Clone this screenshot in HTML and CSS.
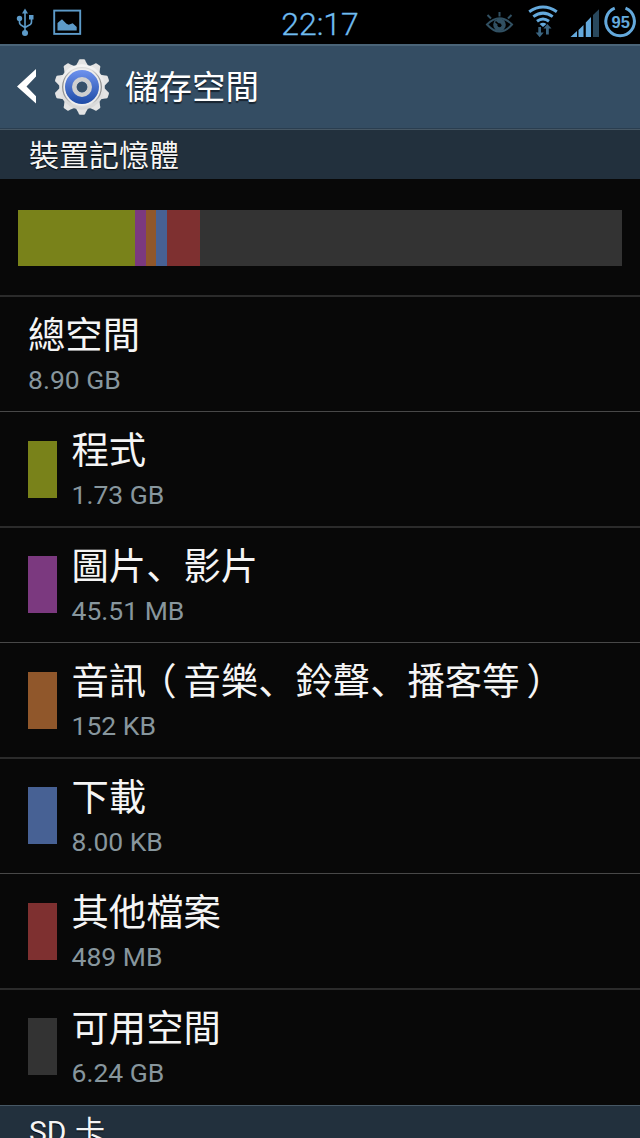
FILE: index.html
```html
<!DOCTYPE html>
<html lang="zh-Hans">
<head>
<meta charset="utf-8">
<title>儲存空間</title>
<link rel="stylesheet" href="styles.css">
</head>
<body>
<header class="status">
  <svg class="status-left" width="90" height="44" viewBox="0 0 90 44">
    <g fill="#5d9bc9" stroke="none">
      <path d="M25 8.500l3 5h-6z"/><circle cx="19.500" cy="18.500" r="2.700"/><rect x="29" y="15" width="4.500" height="4.500"/><circle cx="25" cy="33" r="3"/>
      <path d="M57.500 30.500v-7.500l4.500-3.800 4.500 4.500 2.200 1 4-1.500 4 3.800v3.500z"/>
    </g>
    <g fill="none" stroke="#5d9bc9" stroke-width="1.600">
      <path d="M25 12v20M19.500 19v3.500q0 2 3 3.500l2.500 1.500 3.500-2q3-1 3-3.500v-4"/>
      <rect x="54.200" y="10.600" width="26" height="23.300" stroke-width="1.900"/>
    </g>
  </svg>
  <time class="clock">22:17</time>
  <svg class="status-right" width="160" height="44" viewBox="480 0 160 44">
    <g fill="none" stroke="#315062" stroke-width="2">
      <path d="M487 24.500q12.500-12.500 25 0q-12.500 14-25 0z"/>
      <path d="M499.500 12v4.500M487.500 15l3.500 3.500M511.500 15l-3.500 3.500"/>
    </g>
    <circle cx="499.500" cy="24.800" r="6.300" fill="#315062"/>
    <path d="M499.500 25.200l-4-3.500" stroke="#000" stroke-width="1.600"/>
    <circle cx="499.500" cy="25.200" r="2" fill="#000"/>
    <g fill="none" stroke="#64a9dc" stroke-width="3">
      <path d="M529.200 11.800q13.800-9.500 27.600 0"/><path d="M533.300 16.600q9.700-7 19.400 0"/><path d="M537 21.200q6-4.500 12 0"/>
    </g>
    <path d="M539.500 24q3.500-2.500 7 0l-3.500 3z" fill="#64a9dc"/>
    <path d="M538.300 27h2.700v5.500h2.700l-4 4.800-4-4.800h2.600zM546 34.500h2.800v-6h2.700l-4.100-4.500-4 4.500h2.600z" fill="#3b6581"/>
    <path d="M570.500 37l6.500-6v6zM578.500 30l5-5v12h-5zM585.800 22.500l5.200-5.500v20h-5.200z" fill="#64a9dc"/>
    <path d="M593 15l6-5.800V37h-6z" fill="#29485d"/>
    <path d="M625.500 8.200a14.300 14.300 0 1 1-10.800 0" fill="none" stroke="#64a9dc" stroke-width="3"/>
    <text x="620.700" y="27.500" text-anchor="middle" class="battery">95</text>
  </svg>
</header>
<div class="actionbar">
  <svg class="back" width="20" height="36" viewBox="0 0 20 36"><path d="M19 0v7.500l-9.500 10 9.500 9.700v7.300L0 17.500z" fill="#fff"/></svg>
  <svg class="gear" width="58" height="58" viewBox="-29 -29 58 58">
    <defs>
      <linearGradient id="metal" x1="0" y1="0" x2="0" y2="1"><stop offset="0" stop-color="#f5f5f5"/><stop offset="1" stop-color="#d6d6d6"/></linearGradient>
      <linearGradient id="blue" x1="0" y1="0" x2="0" y2="1"><stop offset="0" stop-color="#6e92ee"/><stop offset="1" stop-color="#1e4ba6"/></linearGradient>
      <linearGradient id="rim" x1="0" y1="0" x2="1" y2="0"><stop offset="0" stop-color="#888"/><stop offset=".25" stop-color="#ddd"/><stop offset=".75" stop-color="#ddd"/><stop offset="1" stop-color="#888"/></linearGradient>
      <path id="tooth" d="M-6-21.500L-3.700-25.500Q-3.200-27.700-2-27.700H2Q3.200-27.700 3.700-25.500L6-21.500z"/>
    </defs>
    <g fill="#e4e4e4">
      <use href="#tooth"/><use href="#tooth" transform="rotate(36)"/><use href="#tooth" transform="rotate(72)"/><use href="#tooth" transform="rotate(108)"/><use href="#tooth" transform="rotate(144)"/><use href="#tooth" transform="rotate(180)"/><use href="#tooth" transform="rotate(216)"/><use href="#tooth" transform="rotate(252)"/><use href="#tooth" transform="rotate(288)"/><use href="#tooth" transform="rotate(324)"/>
    </g>
    <circle r="22.800" fill="url(#metal)"/>
    <circle r="19.300" fill="#eee" stroke="url(#rim)" stroke-width="1.200"/>
    <circle r="17" fill="url(#blue)"/>
    <circle r="7.700" fill="#426b9e" stroke="#cfcfcf" stroke-width="4.600"/>
    <circle r="5.200" fill="#36506a"/>
  </svg>
  <h1 class="title">儲存空間</h1>
</div>
<h2 class="section">裝置記憶體</h2>
<div class="meter">
  <div class="bar"><i class="seg apps"></i><i class="seg pics"></i><i class="seg audio"></i><i class="seg downloads"></i><i class="seg misc"></i><i class="seg free"></i></div>
</div>
<main class="list">
  <div class="row"><div class="info"><div class="name">總空間</div><div class="size">8.90 GB</div></div></div>
  <div class="row"><i class="swatch apps"></i><div class="info"><div class="name">程式</div><div class="size">1.73 GB</div></div></div>
  <div class="row"><i class="swatch pics"></i><div class="info"><div class="name">圖片、影片</div><div class="size">45.51 MB</div></div></div>
  <div class="row"><i class="swatch audio"></i><div class="info"><div class="name">音訊<span class="open">（</span>音樂、鈴聲、播客等<span class="close">）</span></div><div class="size">152 KB</div></div></div>
  <div class="row"><i class="swatch downloads"></i><div class="info"><div class="name">下載</div><div class="size">8.00 KB</div></div></div>
  <div class="row"><i class="swatch misc"></i><div class="info"><div class="name">其他檔案</div><div class="size">489 MB</div></div></div>
  <div class="row"><i class="swatch free"></i><div class="info"><div class="name">可用空間</div><div class="size">6.24 GB</div></div></div>
</main>
<h2 class="section last">SD 卡</h2>
</body>
</html>
```
FILE: styles.css
```css
* { box-sizing: border-box; }
html, body { height: 1138px; overflow: hidden; }
body {
  margin: 0;
  background: #080808;
  color: #f5f5f5;
  font-family: Roboto, "Noto Sans CJK SC", sans-serif;
  display: flex;
  flex-direction: column;
}
body > * { flex-shrink: 0; }
svg { display: block; }
.status {
  height: 44px;
  background: #000;
  display: grid;
  grid-template-columns: 160px 320px 160px;
}
.clock {
  color: #6fbcf0;
  font-size: 32px;
  font-weight: 300;
  -webkit-text-stroke: 0.3px #6fbcf0;
  line-height: 48px;
  text-align: center;
}
.battery { font: bold 16.500px "Liberation Sans", sans-serif; fill: #64a9dc; }
.actionbar {
  height: 85px;
  background: #344d63;
  border-top: 2px solid #4a6478;
  border-bottom: 1px solid #2a3e50;
  display: flex;
  align-items: center;
  padding-left: 17px;
}
.gear { margin-left: 16px; }
.title {
  margin: 2px 0 0 14px;
  font-size: 33.500px;
  line-height: 48px;
  font-weight: 400;
  color: #fff;
  text-shadow: 0 2px 1px #182430;
}
.section {
  margin: 0;
  height: 50px;
  padding-left: 29px;
  background: #22303d;
  border-top: 1px solid #465764;
  font-size: 30px;
  line-height: 52px;
  font-weight: 400;
  word-spacing: 1px;
  text-shadow: 0 1px 1px #000;
}
.last { margin-top: 1px; overflow: hidden; }
.meter { height: 116px; padding: 31px 18px 0; }
.bar { display: flex; height: 56px; }
.seg { width: 11px; }
.seg.apps { width: 117px; }
.seg.pics { width: 11px; }
.seg.audio { width: 10px; }
.seg.misc { width: 33px; }
.seg.free { flex: 1; }
.apps { background: #79821a; }
.pics { background: #7b397f; }
.audio { background: #90572b; }
.downloads { background: #476194; }
.misc { background: #7e3030; }
.free { background: #333; }
.row {
  height: 116px;
  border-top: 2px solid #2b2b2b;
  padding: 11px 0 0 28px;
  display: flex;
}
.row:nth-child(even) {
  height: 115px;
  border-top: 1px solid #484848;
}
.row:nth-child(even) .swatch { margin-top: 18px; }
.swatch { width: 29px; height: 57px; margin: 17px 14.500px 0 0; }
.name { font-size: 37.330px; line-height: 56px; height: 52px; white-space: nowrap; }
.size { font-size: 26.500px; line-height: 40px; color: #87969d; }
.open, .close { font-feature-settings: "halt"; }
.open { margin: 0 7px 0 11.670px; }
.close { margin-left: 7px; }
```
